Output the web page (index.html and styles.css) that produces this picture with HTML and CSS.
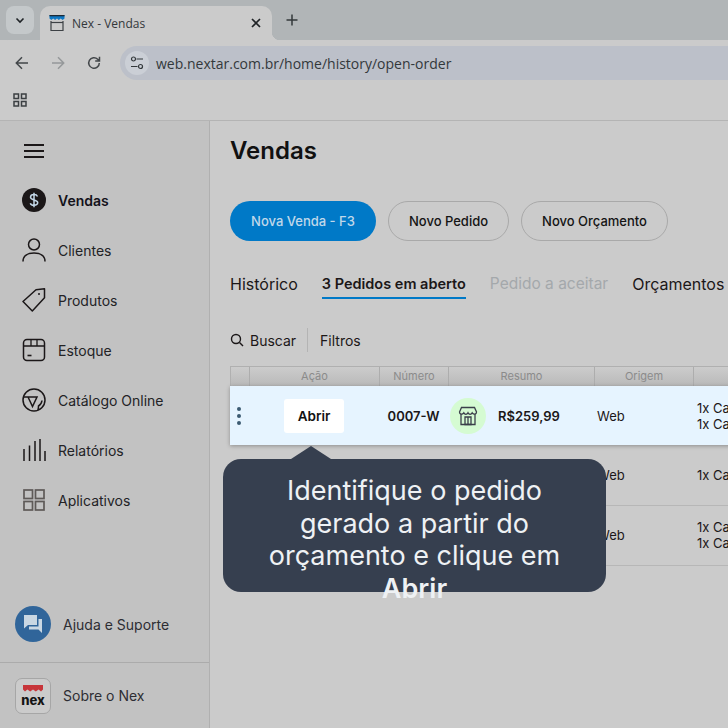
FILE: index.html
```html
<!DOCTYPE html>
<html lang="pt-BR">

<head>
    <meta charset="utf-8">
    <meta name="viewport" content="width=device-width, initial-scale=1.0">
    <title>Nex - Vendas</title>
    <link rel="stylesheet" href="styles.css">
</head>

<body>
    <div class="abas">
        <button class="aba-menu">
            <svg width="12" height="12" viewBox="0 0 12 12"><path d="M2.5 4.5 6 8l3.5-3.5" fill="none" stroke="#1f2326" stroke-width="1.6"/></svg>
        </button>
        <div class="aba">
            <svg width="18" height="18" viewBox="0 0 18 18">
                <path d="M3 7v9.5h12V7" fill="none" stroke="#3d4145" stroke-width="1.2"/>
                <path d="M3 8.5h12" stroke="#3d4145" stroke-width="1.2"/>
                <path d="M1.5 1h15v3.5l-1.900 1.500-1.900-1.500-1.900 1.500-1.800-1.500-1.900 1.500-1.900-1.500-1.900 1.500-1.800-1.500z" fill="#0d77c4"/>
                <path d="M1.500 1h15v1.300h-15z" fill="#1d2a35"/>
            </svg>
            <span class="aba-titulo">Nex - Vendas</span>
            <svg class="aba-fechar" width="10" height="10" viewBox="0 0 10 10"><path d="M1 1l8 8M9 1 1 9" stroke="#1f2326" stroke-width="1.700"/></svg>
        </div>
        <svg class="aba-nova" width="12" height="12" viewBox="0 0 12 12"><path d="M6 .5v11M.5 6h11" stroke="#33383b" stroke-width="1.500"/></svg>
    </div>

    <div class="barra">
        <svg width="16" height="16" viewBox="0 0 16 16"><path d="M14 8H2.500M8 2.300 2.300 8 8 13.700" fill="none" stroke="#43474a" stroke-width="1.500"/></svg>
        <svg width="16" height="16" viewBox="0 0 16 16"><path d="M2 8h11.500M8 2.300 13.700 8 8 13.700" fill="none" stroke="#95989a" stroke-width="1.500"/></svg>
        <svg width="16" height="16" viewBox="0 0 16 16"><path d="M13.300 8a5.300 5.300 0 1 1-1.600-3.800L13.500 6M13.500 1.700V6H9.200" fill="none" stroke="#43474a" stroke-width="1.500"/></svg>
        <div class="endereco">
            <span class="chip">
                <svg width="14" height="14" viewBox="0 0 14 14" fill="none" stroke="#33383b" stroke-width="1.200">
                    <circle cx="3.500" cy="3" r="2"/><path d="M6.500 3H13M1 10.500h6.500"/><circle cx="10.500" cy="10.500" r="2"/>
                </svg>
            </span>
            <span>web.nextar.com.br/home/history/open-order</span>
        </div>
    </div>

    <div class="favoritos">
        <svg width="16" height="16" viewBox="0 0 16 16" fill="none" stroke="#3c4043" stroke-width="1.500">
            <rect x="2" y="2" width="4.500" height="4.500"/><rect x="9.500" y="2" width="4.500" height="4.500"/>
            <rect x="2" y="9.500" width="4.500" height="4.500"/><rect x="9.500" y="9.500" width="4.500" height="4.500"/>
        </svg>
    </div>

    <div class="app">
        <aside class="lateral">
            <div class="hamburguer"><span></span><span></span><span></span></div>
            <nav class="menu">
                <a class="item ativo">
                    <svg width="24" height="24" viewBox="0 0 24 24">
                        <circle cx="12" cy="12" r="12" fill="#1b1718"/>
                        <path d="M15.500 8.500c-.5-1.200-1.800-1.900-3.500-1.900-2 0-3.500 1-3.500 2.600 0 3.500 7.200 1.900 7.200 5.400 0 1.600-1.600 2.700-3.700 2.700-1.800 0-3.200-.8-3.700-2.100M12 4.800v14.400" fill="none" stroke="#c4d8e8" stroke-width="1.500"/>
                    </svg>
                    Vendas
                </a>
                <a class="item">
                    <svg width="24" height="24" viewBox="0 0 24 24" fill="none" stroke="#1b1718" stroke-width="1.500">
                        <circle cx="12" cy="6.500" r="5.500"/><path d="M1 23.500c0-5.500 4.500-8.500 11-8.500s11 3 11 8.500"/>
                    </svg>
                    Clientes
                </a>
                <a class="item">
                    <svg width="24" height="24" viewBox="0 0 24 24" fill="none" stroke="#1b1718" stroke-width="1.500" stroke-linejoin="round">
                        <path d="M1 13.500 14 1.800l8.500-1v9L10.300 23z"/>
                        <circle cx="17" cy="6" r="1" fill="#1b1718" stroke="none"/>
                    </svg>
                    Produtos
                </a>
                <a class="item">
                    <svg width="24" height="24" viewBox="0 0 24 24" fill="none" stroke="#1b1718" stroke-width="1.500">
                        <rect x="1.500" y="1.500" width="21" height="21" rx="3.500"/>
                        <path d="M1.500 8h21M9 1.500V8M15 1.500V8" stroke-width="1.300"/><path d="M5.500 17.500h4" stroke-width="1.600"/>
                    </svg>
                    Estoque
                </a>
                <a class="item">
                    <svg width="24" height="24" viewBox="0 0 24 24" fill="none" stroke="#1b1718" stroke-width="1.500">
                        <circle cx="12" cy="12" r="11"/>
                        <path d="M1.500 9h13.500l-4.500 9.500-4.500-9.500M20 12.500c-.3 3-1 4-3.500 5.500 0 2-.5 3.500-.5 4"/>
                    </svg>
                    Catálogo Online
                </a>
                <a class="item">
                    <svg width="24" height="24" viewBox="0 0 24 24" stroke="#1b1718" stroke-width="1.500">
                        <path d="M2 23V11M7.500 23V7.500M13 23V3M18 23V1M23 23V13"/>
                    </svg>
                    Relatórios
                </a>
                <a class="item">
                    <svg width="24" height="24" viewBox="0 0 24 24" fill="none" stroke="#5e5a58" stroke-width="1.700">
                        <rect x="2" y="2" width="8.500" height="8.500"/><rect x="13.500" y="2" width="8.500" height="8.500"/>
                        <rect x="2" y="13.500" width="8.500" height="8.500"/><rect x="13.500" y="13.500" width="8.500" height="8.500"/>
                    </svg>
                    Aplicativos
                </a>
            </nav>
            <div class="ajuda">
                <span class="ajuda-icone">
                    <svg width="20" height="20" viewBox="0 0 20 20" fill="#c9d7e3">
                        <path d="M1 1h13v10H5l-4 3.500z"/><path d="M15.500 5H19v14l-3.500-3.500H6V12.500h9.500z"/>
                    </svg>
                </span>
                Ajuda e Suporte
            </div>
            <div class="sobre">
                <span class="logo">
                    <svg width="22" height="8" viewBox="0 0 22 8"><path d="M1 0h20v4.500l-2 2-2.400-2-2.800 2-2.800-2-2.800 2-2.800-2-2.400 2-2-2z" fill="#c7353a"/></svg>
                    <b>nex</b>
                </span>
                Sobre o Nex
            </div>
        </aside>

        <main class="conteudo">
            <h1>Vendas</h1>
            <div class="botoes">
                <button class="botao azul">Nova Venda - F3</button>
                <button class="botao">Novo Pedido</button>
                <button class="botao">Novo Orçamento</button>
            </div>
            <div class="guias">
                <span>Histórico</span>
                <span class="guia-ativa">3 Pedidos em aberto</span>
                <span class="guia-off">Pedido a aceitar</span>
                <span>Orçamentos</span>
            </div>
            <div class="busca">
                <svg width="14" height="14" viewBox="0 0 14 14" fill="none" stroke="#1b1718" stroke-width="1.400"><circle cx="6" cy="6" r="4.500"/><path d="m9.500 9.500 3.500 3.500"/></svg>
                <span>Buscar</span>
                <i></i>
                <span>Filtros</span>
            </div>

            <div class="tabela">
                <div class="linha topo">
                    <div></div><div>Ação</div><div>Número</div><div>Resumo</div><div>Origem</div><div></div>
                </div>
                <div class="linha destaque">
                    <div class="pontos"><span></span><span></span><span></span></div>
                    <div class="acao"><button class="abrir">Abrir</button></div>
                    <div class="numero">0007-W</div>
                    <div class="resumo">
                        <span class="loja">
                            <svg width="20" height="20" viewBox="0 0 20 20" fill="none" stroke="#3b3f4a" stroke-width="1.300">
                                <path d="M3 8v10.500h14V8"/><path d="M1.500 6 3.500 1.500h13L18.500 6c0 2.800-3 2.800-4.300.8-1 2-3.200 2-4.200 0-1 2-3.200 2-4.200 0C4.500 8.800 1.500 8.800 1.500 6z"/>
                                <path d="M7 11h6v7.500H7zM10 11v7.500"/>
                            </svg>
                        </span>
                        <b>R$259,99</b>
                    </div>
                    <div class="origem">Web</div>
                    <div class="itens">1x Camiseta<br>1x Camiseta</div>
                </div>
                <div class="linha comum">
                    <div></div><div></div><div></div><div></div>
                    <div class="origem">Web</div>
                    <div class="itens">1x Camiseta</div>
                </div>
                <div class="linha comum">
                    <div></div><div></div><div></div><div></div>
                    <div class="origem">Web</div>
                    <div class="itens">1x Camiseta<br>1x Camiseta</div>
                </div>
            </div>

            <div class="dica">
                Identifique o pedido gerado a partir do orçamento e clique em <b>Abrir</b>
            </div>
        </main>
    </div>
</body>

</html>
```

FILE: styles.css
```css
* {
    box-sizing: border-box;
}

body {
    margin: 0;
    width: 728px;
    height: 728px;
    overflow: hidden;
    font-family: Inter, "Liberation Sans", sans-serif;
    font-size: 14px;
    color: #1b1718;
    background: #cbcbcb;
}

button {
    font-family: inherit;
    font-size: inherit;
    cursor: pointer;
}

/* barra do navegador */
.abas {
    height: 40px;
    background: #b1b5b7;
    display: flex;
    align-items: flex-start;
    padding: 6px 0 0 6px;
}

.aba-menu {
    width: 28px;
    height: 28px;
    border: 0;
    border-radius: 8px;
    background: #c4c8ca;
    display: flex;
    align-items: center;
    justify-content: center;
    padding: 0;
}

.aba {
    position: relative;
    width: 232px;
    height: 34px;
    margin-left: 6px;
    background: #cbcbcb;
    border-radius: 10px 10px 0 0;
    display: flex;
    align-items: center;
    padding: 0 11px 0 8px;
    font-family: "Open Sans", sans-serif;
    font-size: 12px;
    color: #33383b;
}

.aba::after {
    content: "";
    position: absolute;
    right: -8px;
    bottom: 0;
    width: 8px;
    height: 8px;
    background: radial-gradient(circle at 100% 0, transparent 8px, #cbcbcb 8.5px);
}

.aba-titulo {
    margin-left: 6px;
    flex: 1;
}

.aba-nova {
    margin: 8px 0 0 14px;
}

.barra {
    height: 40px;
    background: #cbcbcb;
    border-top-left-radius: 8px;
    display: flex;
    align-items: flex-end;
    gap: 20px;
    padding-left: 14px;
    margin-top: 0;
}

.barra > svg {
    margin-bottom: 9px;
}

.endereco {
    flex: 1;
    height: 34px;
    margin-left: -2px;
    background: #bcc0c9;
    border-radius: 17px 0 0 17px;
    display: flex;
    align-items: center;
    gap: 7px;
    padding-left: 5px;
    font-family: "Open Sans", sans-serif;
    font-size: 14px;
    color: #33383b;
}

.chip {
    width: 24px;
    height: 24px;
    border-radius: 50%;
    background: #cbcfd6;
    display: flex;
    align-items: center;
    justify-content: center;
}

.favoritos {
    height: 41px;
    padding: 12px 0 0 12px;
    border-bottom: 1px solid #b4b4b4;
}

/* aplicativo */
.app {
    display: flex;
    height: 607px;
}

.lateral {
    width: 210px;
    flex-shrink: 0;
    background: #c2c2c2;
    border-right: 1px solid #b0b0b0;
    display: flex;
    flex-direction: column;
}

.hamburguer {
    width: 20px;
    margin: 23px 0 0 24px;
    height: 14px;
    display: flex;
    flex-direction: column;
    justify-content: space-between;
}

.hamburguer span {
    height: 2px;
    background: #1b1718;
}

.menu {
    margin-top: 17px;
}

.item {
    height: 50px;
    display: flex;
    align-items: center;
    gap: 12px;
    padding-left: 22px;
    color: #232326;
}

.ativo {
    font-weight: 600;
    color: #14121a;
}

.ajuda {
    margin-top: auto;
    height: 76px;
    display: flex;
    align-items: center;
    gap: 12px;
    padding-left: 15px;
    padding-bottom: 0;
    color: #2d2d33;
}

.ajuda-icone {
    width: 36px;
    height: 36px;
    border-radius: 50%;
    background: #30659a;
    display: flex;
    align-items: center;
    justify-content: center;
}

.sobre {
    height: 66px;
    border-top: 1px solid #ababab;
    display: flex;
    align-items: center;
    gap: 12px;
    padding-left: 15px;
    color: #2d2d33;
}

.logo {
    width: 36px;
    height: 36px;
    border: 1px solid #a6a6a6;
    border-radius: 7px;
    background: #cbcbcb;
    display: flex;
    flex-direction: column;
    align-items: center;
    justify-content: center;
    gap: 2px;
}

.logo b {
    font-size: 13px;
    line-height: 11px;
    font-weight: 800;
    color: #141414;
}

.conteudo {
    position: relative;
    flex: 1;
    min-width: 0;
    overflow: hidden;
    padding: 14px 0 0 20px;
}

h1 {
    margin: 0;
    font-size: 24px;
    line-height: 32px;
    font-weight: 600;
    color: #111;
}

.botoes {
    display: flex;
    gap: 12px;
    margin-top: 34px;
}

.botao {
    height: 40px;
    padding: 0 20px;
    border: 1px solid #a9a9a9;
    border-radius: 20px;
    background: transparent;
    font-size: 13px;
    font-weight: 500;
    color: #141414;
}

.azul {
    width: 146px;
    padding: 0;
    border: 0;
    background: #0079c7;
    color: #c0d8ea;
}

.guias {
    display: flex;
    gap: 24px;
    margin-top: 31px;
    font-size: 16px;
    white-space: nowrap;
}

.guias span {
    height: 27px;
    line-height: 24px;
}

.guia-ativa {
    font-size: 14.500px;
    font-weight: 600;
    border-bottom: 2px solid #0079c7;
}

.guia-off {
    font-size: 15.500px;
    color: #a4a8ab;
}

.busca {
    display: flex;
    align-items: center;
    height: 24px;
    margin-top: 29px;
    gap: 6px;
}

.busca span:first-of-type {
    margin-right: 5px;
}

.busca i {
    width: 1px;
    height: 24px;
    background: #b4b4b4;
    margin-right: 6px;
}

.tabela {
    width: 560px;
    margin: 14px 0 0 0;
}

.linha {
    display: grid;
    grid-template-columns: 19px 130px 69px 146px 99px 1fr;
    align-items: center;
}

.topo {
    height: 20px;
    align-items: stretch;
    border-top: 1px solid #b0b0b0;
    border-left: 1px solid #b0b0b0;
    background: linear-gradient(#cccccc, #b9b9b9);
    font-size: 11px;
    color: #8b8b8b;
    text-align: center;
}

.topo div {
    line-height: 19px;
    border-right: 1px solid #adadad;
}

.destaque {
    position: relative;
    height: 59px;
    background: #e6f4ff;
    box-shadow: 0 1px 4px rgba(0, 0, 0, 0.3);
    font-size: 13px;
}

.comum {
    height: 60.500px;
    border-bottom: 1px solid #b7b7b7;
    font-size: 13px;
}

.pontos {
    display: flex;
    flex-direction: column;
    gap: 3px;
    align-items: center;
    padding-left: 0;
    margin-left: -1px;
}

.pontos span {
    width: 4px;
    height: 4px;
    border-radius: 50%;
    background: #3c5a72;
}

.acao {
    text-align: center;
}

.abrir {
    width: 60px;
    height: 34px;
    border: 0;
    border-radius: 3px;
    background: #fff;
    font-size: 13.500px;
    font-weight: 600;
    color: #111;
}

.numero {
    font-weight: 600;
    text-align: center;
}

.resumo {
    display: flex;
    align-items: center;
    gap: 12px;
    padding-left: 2px;
}

.resumo b {
    font-weight: 600;
}

.loja {
    width: 36px;
    height: 36px;
    border-radius: 50%;
    background: #d5fbd2;
    display: flex;
    align-items: center;
    justify-content: center;
}

.origem {
    padding-left: 3px;
}

.itens {
    padding-left: 4px;
    line-height: 16px;
    white-space: nowrap;
}

.dica {
    position: absolute;
    left: 13px;
    top: 338px;
    width: 383px;
    height: 133px;
    padding: 16px 16px 0;
    border-radius: 18px;
    background: #363f4f;
    color: #eef1f4;
    font-size: 27px;
    line-height: 32.500px;
    text-align: center;
}

.dica b {
    font-weight: 600;
}

.dica::before {
    content: "";
    position: absolute;
    left: 68px;
    top: -13px;
    border-left: 20px solid transparent;
    border-right: 20px solid transparent;
    border-bottom: 13px solid #363f4f;
}
```
